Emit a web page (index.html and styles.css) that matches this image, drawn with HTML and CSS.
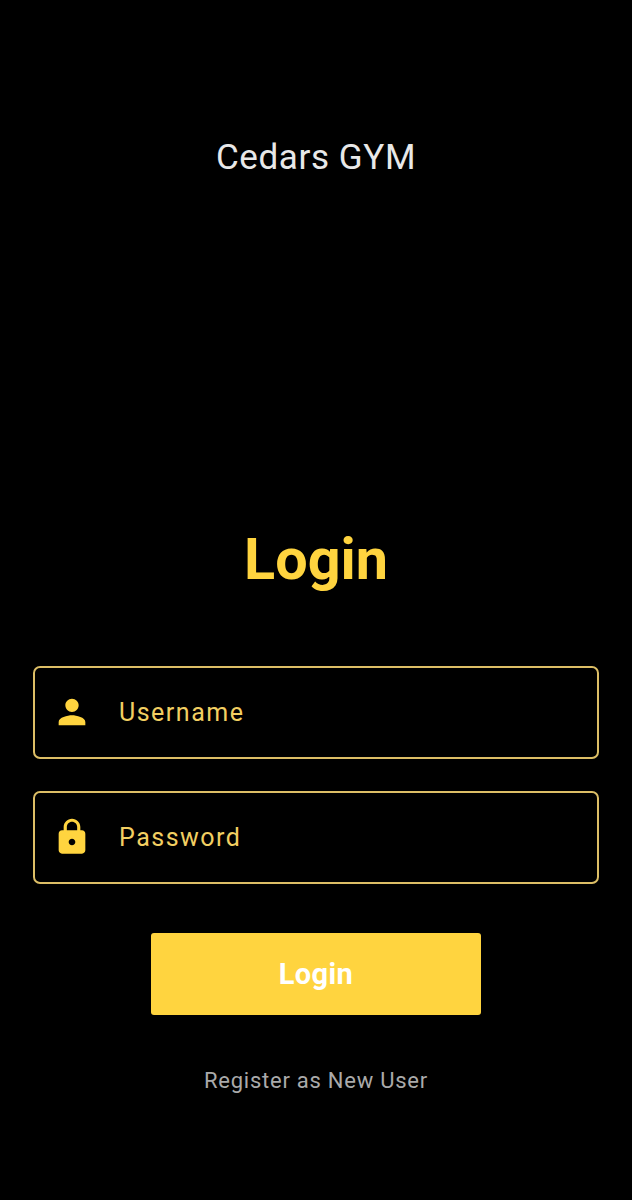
FILE: index.html
```html
<!DOCTYPE html>
<html lang="en">

<head>
    <meta charset="UTF-8">
    <meta name="viewport" content="width=device-width, initial-scale=1.0">
    <title>Cedars GYM</title>
    <link rel="stylesheet" href="styles.css">
</head>

<body>

    <div class="app-title">Cedars GYM</div>

    <div class="login-area">
        <h1>Login</h1>

        <div class="form-element">
            <svg class="field-icon" viewBox="0 0 24 24"><path d="M12 12c2.21 0 4-1.79 4-4s-1.79-4-4-4-4 1.79-4 4 1.79 4 4 4zm0 2c-2.67 0-8 1.34-8 4v2h16v-2c0-2.66-5.33-4-8-4z"/></svg>
            <span class="field-text">Username</span>
        </div>

        <div class="form-element">
            <svg class="field-icon" viewBox="0 0 24 24"><path d="M18 8h-1V6c0-2.76-2.24-5-5-5S7 3.24 7 6v2H6c-1.1 0-2 .9-2 2v10c0 1.1.9 2 2 2h12c1.1 0 2-.9 2-2V10c0-1.1-.9-2-2-2zm-6 9c-1.1 0-2-.9-2-2s.9-2 2-2 2 .9 2 2-.9 2-2 2zm3.1-9H8.9V6c0-1.71 1.39-3.1 3.1-3.1 1.71 0 3.1 1.39 3.1 3.1v2z"/></svg>
            <span class="field-text">Password</span>
        </div>

        <button type="button" class="login-btn">Login</button>
        <div class="register">Register as New User</div>
    </div>

</body>

</html>
```

FILE: styles.css
```css
* {
    margin: 0px;
    box-sizing: border-box;
}

body {
    width: 100%;
    height: 100vh;
    background-color: #000000;
    font-family: Roboto, "Liberation Sans", sans-serif;
    overflow: hidden;
}

.app-title {
    padding-top: 137px;
    height: 179px;
    line-height: 42px;
    font-size: 35px;
    letter-spacing: 0.6px;
    text-align: center;
    color: #e8e8e8;
}

.login-area {
    padding-top: 348px;
    display: flex;
    flex-direction: column;
    align-items: center;
}

h1 {
    font-size: 57.5px;
    line-height: 66px;
    font-weight: 700;
    color: #ffd43f;
    margin-bottom: 73px;
}

.form-element {
    width: 566px;
    height: 92.5px;
    margin-bottom: 32.5px;
    padding-left: 17px;
    border: 2px solid #dcbe66;
    border-radius: 7px;
    display: flex;
    align-items: center;
}

.field-icon {
    width: 40px;
    height: 40px;
    fill: #ffd43f;
    flex-shrink: 0;
}

.field-text {
    margin-left: 27px;
    font-size: 25px;
    letter-spacing: 1.5px;
    color: #f2cf62;
}

.login-btn {
    width: 330px;
    height: 82px;
    margin-top: 17px;
    border: none;
    border-radius: 3px;
    background-color: #ffd43f;
    color: #ffffff;
    font-family: inherit;
    font-size: 29px;
    font-weight: 700;
    letter-spacing: 0.4px;
}

.register {
    margin-top: 53px;
    font-size: 22px;
    letter-spacing: 0.75px;
    color: #aaaaaa;
}
```
